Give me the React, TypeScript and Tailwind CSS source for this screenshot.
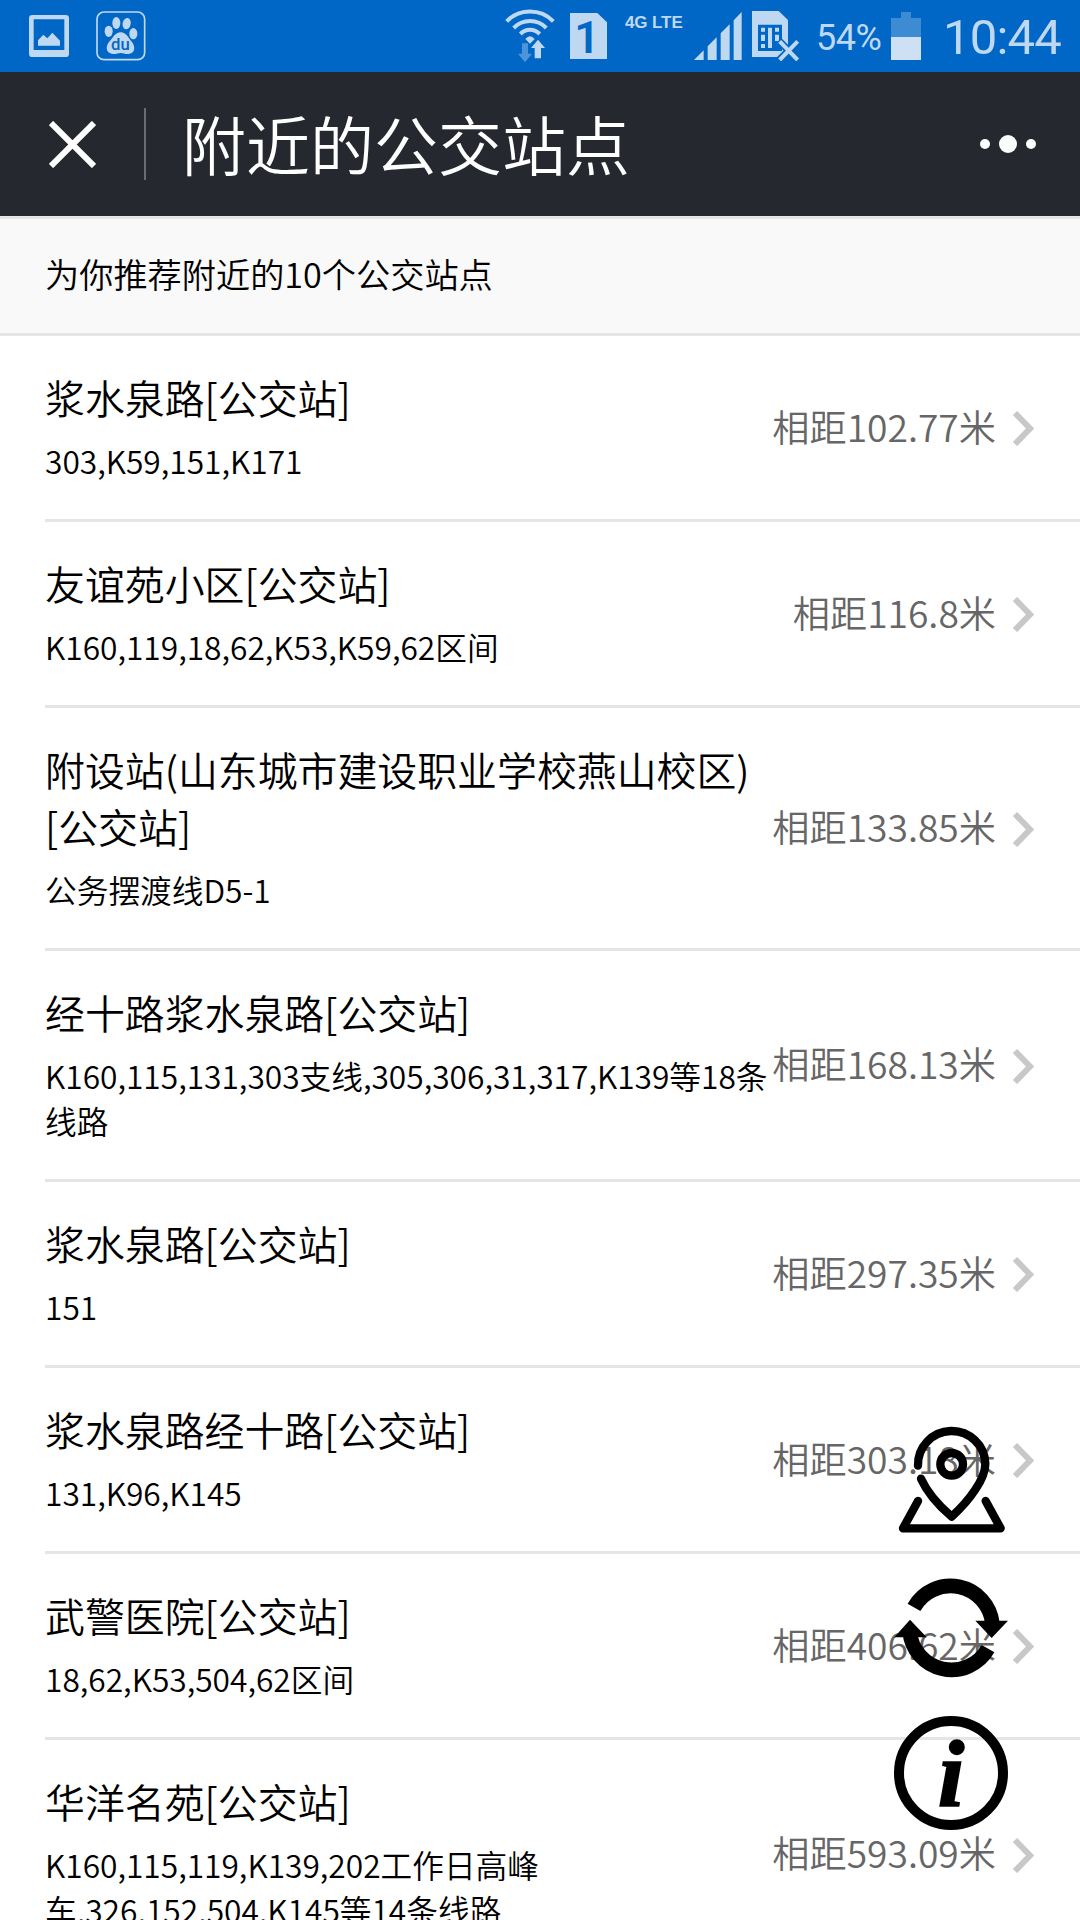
import type { ReactNode } from "react";

interface Station {
  name: string;
  lines: string;
  distance: string;
}

const STATIONS: Station[] = [
  { name: "浆水泉路[公交站]", lines: "303,K59,151,K171", distance: "102.77" },
  { name: "友谊苑小区[公交站]", lines: "K160,119,18,62,K53,K59,62区间", distance: "116.8" },
  { name: "附设站(山东城市建设职业学校燕山校区)[公交站]", lines: "公务摆渡线D5-1", distance: "133.85" },
  { name: "经十路浆水泉路[公交站]", lines: "K160,115,131,303支线,305,306,31,317,K139等18条线路", distance: "168.13" },
  { name: "浆水泉路[公交站]", lines: "151", distance: "297.35" },
  { name: "浆水泉路经十路[公交站]", lines: "131,K96,K145", distance: "303.18" },
  { name: "武警医院[公交站]", lines: "18,62,K53,504,62区间", distance: "406.62" },
  { name: "华洋名苑[公交站]", lines: "K160,115,119,K139,202工作日高峰车,326,152,504,K145等14条线路", distance: "593.09" },
];

const TINT = "#bfd8f1";
const BLUE = "#0067c6";

/* ---- Status bar ---------------------------------------------------------- */

function PictureIcon() {
  return (
    <svg className="ml-[29px] h-[42px] w-10" viewBox="0 0 120 126">
      <path
        fill={TINT}
        fillRule="evenodd"
        d="M10 0h100q10 0 10 10v106q0 10-10 10H10q-10 0-10-10V10Q0 0 10 0ZM14 13v92h92V13Z"
      />
      <path fill={TINT} d="M27 92V76L43 59l12 11 15-17 23 24v15Z" />
    </svg>
  );
}

function PawIcon() {
  return (
    <svg className="ml-[27px] h-[50px] w-[50px]" viewBox="0 0 150 150">
      <rect x="3" y="3" width="143" height="143" rx="21" fill="none" stroke={TINT} strokeWidth="5" />
      <g fill={TINT}>
        <ellipse cx="38" cy="61" rx="12" ry="17" />
        <ellipse cx="61" cy="36" rx="12" ry="18" />
        <ellipse cx="92" cy="38" rx="12" ry="17" transform="rotate(12 92 38)" />
        <ellipse cx="112" cy="68" rx="12" ry="17" />
        <path d="M74 64c17 0 22 16 32 27 12 13 14 36-8 38-10 1-16-3-24-3s-14 4-24 3c-22-2-22-25-9-38 11-11 16-27 33-27Z" />
      </g>
      <text x="73" y="118" textAnchor="middle" fontFamily="Roboto, sans-serif" fontWeight="500" fontSize="50" fill={BLUE}>
        du
      </text>
    </svg>
  );
}

function WifiIcon() {
  return (
    <svg className="h-[54px] w-[50px]" viewBox="45 26 150 162">
      <g fill="none" stroke={TINT} strokeWidth="12">
        <path d="M50 63A98 98 0 0 1 190 63" />
        <path d="M71 83A68 68 0 0 1 169 83" />
        <path d="M91 101A40 40 0 0 1 149 101" />
      </g>
      <path fill={TINT} d="M106 116q14-16 28 0l-14 14Z" />
      <path fill="#4d95d9" d="M96 129h18v31h12l-21 26-21-26h12Z" />
      <path fill={TINT} stroke={BLUE} strokeWidth="3" paintOrder="stroke" d="M144 118l21 25h-12v31h-19v-31h-11Z" />
    </svg>
  );
}

function SimOneIcon() {
  return (
    <svg className="ml-[15px] h-[46px] w-[37px] overflow-visible" viewBox="240 39 111 138">
      <path fill={TINT} d="M240 39h82l29 28v110H240Z" />
      <text x="291" y="158" textAnchor="middle" fontFamily="Roboto, sans-serif" fontWeight="600" fontSize="134" fill={BLUE}>
        1
      </text>
    </svg>
  );
}

function SignalIcon() {
  return (
    <svg className="ml-[11px] h-12 w-12" viewBox="610 36 144 144">
      <path
        fill={TINT}
        d="M610 180l29-29v29ZM651 139l27-27v68h-27ZM690 100l27-27v107h-27ZM729 61l24-25v144h-24Z"
      />
    </svg>
  );
}

function SimErrorIcon() {
  return (
    <svg className="ml-[10px] h-[50px] w-[48px]" viewBox="786 33 144 150">
      <path fill={TINT} d="M786 33h80l28 27v88l-22 23h-86Z" />
      <path
        fill={BLUE}
        fillRule="evenodd"
        d="M804 74h72v79h-72ZM813 83v12h12V83ZM813 104v19h12v-19ZM813 132v12h12v-12ZM834 83v61h12V83ZM855 83v12h12V83ZM855 104v19h12v-19Z"
      />
      <path fill="none" stroke={BLUE} strokeWidth="22" d="M866 122l60 60M926 122l-60 60" />
      <path fill="none" stroke={TINT} strokeWidth="12" d="M869 124l54 56M923 124l-54 56" />
    </svg>
  );
}

function BatteryIcon() {
  return (
    <div className="flex flex-col items-center">
      <div className="h-1.5 w-2.5 bg-[#3c8bd3]" />
      <div className="h-[19px] w-[30px] bg-[#3c8bd3]" />
      <div className="h-[23px] w-[30px] bg-[#cde0f4]" />
    </div>
  );
}

function StatusBar() {
  return (
    <div className="flex h-[72px] items-center justify-between bg-[#0067c6] font-[Roboto,sans-serif] text-[#bfd8f1]">
      <div className="flex items-center">
        <PictureIcon />
        <PawIcon />
      </div>
      <div className="flex items-center pr-[19px]">
        <WifiIcon />
        <SimOneIcon />
        <span className="ml-[18px] w-[58px] pb-[26px] font-['Liberation_Sans',sans-serif] text-[17px] leading-5 font-bold tracking-[-0.1px] whitespace-nowrap">
          4G LTE
        </span>
        <SignalIcon />
        <SimErrorIcon />
        <span className="mr-[11px] ml-4 w-[64px] pt-1 text-[36px] leading-none font-normal tracking-[-0.5px]">54%</span>
        <BatteryIcon />
        <span className="ml-[21px] w-[119px] pt-[3px] text-right text-[49px] leading-none font-normal tracking-[-0.8px]">
          10:44
        </span>
      </div>
    </div>
  );
}

/* ---- Title bar ----------------------------------------------------------- */

function TitleBar() {
  return (
    <header className="flex h-36 items-center bg-[#26282f] text-white">
      <svg className="ml-[49px] h-[47px] w-[47px]" viewBox="0 0 47 47" stroke="white" strokeWidth="6">
        <path d="M2 2l43 43M45 2L2 45" />
      </svg>
      <div className="ml-12 h-[72px] w-0.5 bg-[#6b6c71]" />
      <h1 className="ml-9 flex-1 pb-1 text-[64px] leading-none">附近的公交站点</h1>
      <div className="mr-11 flex items-center gap-[9px]">
        <span className="size-2.5 rounded-full bg-white" />
        <span className="size-[18px] rounded-full bg-white" />
        <span className="size-2.5 rounded-full bg-white" />
      </div>
    </header>
  );
}

/* ---- Station list -------------------------------------------------------- */

function StationRow({ station }: { station: Station }) {
  return (
    <li className="ml-[45px] flex items-center border-b-[3px] border-[#e5e5e5] pt-8 pr-[46px] pb-9">
      <div className="min-w-0 flex-1">
        <h2 className="text-[39.9px] leading-[57px]">{station.name}</h2>
        <p className="mt-[13px] text-[31.7px] leading-[45px]">{station.lines}</p>
      </div>
      <span className="text-[37.2px] leading-[54px] whitespace-nowrap text-[#666]">相距{station.distance}米</span>
      <svg className="mt-[5px] ml-4 h-9 w-[22px]" viewBox="0 0 22 36" fill="none" stroke="#c8c8c8" strokeWidth="6">
        <path d="M3 3l15 15.500L3 34" />
      </svg>
    </li>
  );
}

/* ---- Floating actions ---------------------------------------------------- */

function ActionIcon({ viewBox, children }: { viewBox: string; children: ReactNode }) {
  return (
    <svg className="size-[114px]" viewBox={viewBox} fill="none" stroke="black">
      {children}
    </svg>
  );
}

function FloatingActions() {
  return (
    <div className="absolute top-[1422px] left-[894px] flex flex-col gap-[33px]">
      <ActionIcon viewBox="72 66 342 342">
        <g strokeWidth="25" strokeLinecap="round" strokeLinejoin="round">
          <path d="M144 197A101 101 0 0 1 346 191C346 236 300 300 245 350C210 320 172 278 153 236" />
          <circle cx="245" cy="193" r="34" />
          <path d="M144 303L99 385H392L347 303" />
        </g>
      </ActionIcon>
      <ActionIcon viewBox="72 27 342 342">
        <path strokeWidth="44" d="M132 142A126 126 0 0 1 367 190M119 215A126 126 0 0 0 354 266" />
        <path fill="black" stroke="none" d="M316 182H414L365 234ZM73 232L120 179L170 232Z" />
      </ActionIcon>
      <ActionIcon viewBox="72 48 342 342">
        <circle cx="243" cy="219" r="156" strokeWidth="30" />
        <text
          x="243"
          y="317"
          textAnchor="middle"
          fontFamily="Liberation Serif, serif"
          fontStyle="italic"
          fontWeight="700"
          fontSize="288"
          fill="black"
          strokeWidth="5"
        >
          i
        </text>
      </ActionIcon>
    </div>
  );
}

export default function App() {
  return (
    <div className="relative h-[1920px] w-[1080px] overflow-hidden bg-white font-['Noto_Sans_CJK_SC',sans-serif] font-[350] text-black">
      <StatusBar />
      <TitleBar />
      <p className="border-y-[3px] border-[#e5e5e5] bg-[#f9f9f9] px-[45px] pb-1.5 text-[34.2px] leading-[108px]">
        为你推荐附近的10个公交站点
      </p>
      <ul>
        {STATIONS.map((station) => (
          <StationRow key={station.distance} station={station} />
        ))}
      </ul>
      <FloatingActions />
    </div>
  );
}
